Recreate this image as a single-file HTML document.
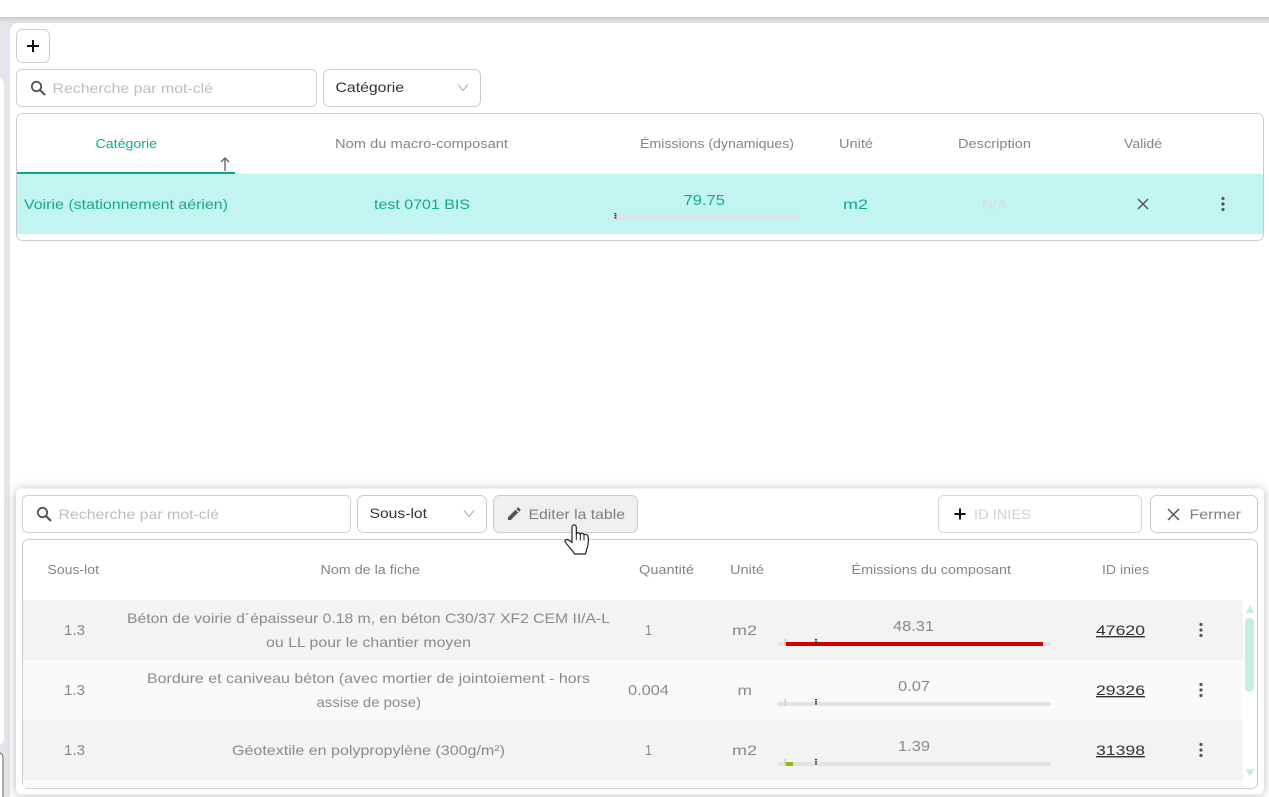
<!DOCTYPE html>
<html lang="fr"><head><meta charset="utf-8"><title>Macro-composants</title>
<style>
html,body{margin:0;padding:0;width:1269px;height:797px;overflow:hidden;background:#e3e5ea}
svg{position:absolute;left:0;top:0;display:block}
text{font-family:"Liberation Sans",sans-serif;font-size:14px;fill:#888}
.h{font-size:13px;fill:#858585}
.t{fill:#14a88f}
.p{fill:#bdbdbd}
.d{fill:#333}
.v{fill:#8a8a8a}
.n{font-size:14.5px}
.l{fill:#333;text-decoration:underline}
</style></head><body>
<svg width="1269" height="797" viewBox="0 0 1269 797" xmlns="http://www.w3.org/2000/svg">
<defs>
<linearGradient id="sh" x1="0" y1="0" x2="0" y2="1"><stop offset="0" stop-color="#c9cbd0"/><stop offset="1" stop-color="#e3e5ea"/></linearGradient>
<filter id="b" x="-5%" y="-20%" width="110%" height="140%"><feGaussianBlur stdDeviation="5"/></filter>
<g id="dots" fill="#555"><circle cx="0" cy="-5.5" r="1.6"/><circle cx="0" cy="0" r="1.6"/><circle cx="0" cy="5.5" r="1.6"/></g>
</defs>
<rect x="0" y="0" width="1269" height="17" fill="#fff"/>
<rect x="0" y="17" width="1269" height="6" fill="url(#sh)"/>
<rect x="-10" y="78" width="14" height="667" rx="6" fill="#fff"/>
<rect x="-10" y="752" width="13" height="60" rx="6" fill="#fff" stroke="#666" stroke-width="1"/>
<rect x="10" y="23" width="1280" height="800" rx="8" fill="#fff"/>

<rect x="16.5" y="29.5" width="33" height="33" rx="6" fill="#fff" stroke="#ccc"/>
<path d="M33 40v12M27 46h12" stroke="#111" stroke-width="2" fill="none"/>
<rect x="16.5" y="69.5" width="300" height="37" rx="5" fill="#fff" stroke="#d2d2d2"/>
<circle cx="36.5" cy="86.5" r="4.7" fill="none" stroke="#555" stroke-width="1.8"/>
<path d="M40 90l5 5" stroke="#555" stroke-width="2.2"/>
<text class="p" x="52.500" y="93" textLength="160.500" lengthAdjust="spacingAndGlyphs">Recherche par mot-clé</text>
<rect x="323.5" y="69.5" width="157" height="37" rx="6" fill="#fff" stroke="#ccc"/>
<text class="d" x="335.500" y="92" textLength="68.500" lengthAdjust="spacingAndGlyphs">Catégorie</text>
<path d="M458 84.5l5 6 5-6" fill="none" stroke="#aaa" stroke-width="1"/>

<rect x="16.5" y="113.5" width="1247" height="127" rx="6" fill="#fff" stroke="#ccc"/>
<text class="h t" x="95.500" y="148" textLength="61.500" lengthAdjust="spacingAndGlyphs">Catégorie</text>
<text class="h" x="335" y="148" textLength="173" lengthAdjust="spacingAndGlyphs">Nom du macro-composant</text>
<text class="h" x="640" y="148" textLength="154" lengthAdjust="spacingAndGlyphs">Émissions (dynamiques)</text>
<text class="h" x="839" y="148" textLength="34" lengthAdjust="spacingAndGlyphs">Unité</text>
<text class="h" x="958" y="148" textLength="73" lengthAdjust="spacingAndGlyphs">Description</text>
<text class="h" x="1124" y="148" textLength="38" lengthAdjust="spacingAndGlyphs">Validé</text>
<path d="M225 171v-12.5M221 162l4-4 4 4" fill="none" stroke="#666" stroke-width="1.4"/>
<rect x="17" y="172" width="218" height="2" fill="#0aa88f"/>
<rect x="17" y="174" width="1246" height="60" fill="#c2f5ef"/>
<text class="t" x="24" y="209" textLength="204" lengthAdjust="spacingAndGlyphs">Voirie (stationnement aérien)</text>
<text class="t" x="374" y="209" textLength="96" lengthAdjust="spacingAndGlyphs">test 0701 BIS</text>
<text class="t n" x="683.500" y="205" textLength="41.500" lengthAdjust="spacingAndGlyphs">79.75</text>
<rect x="614" y="215" width="185" height="5" rx="1" fill="#e2e2e2"/>
<path d="M615.500 213v6" stroke="#111" stroke-width="1.800" stroke-dasharray="1.300 .8"/>
<text class="t" x="843" y="209" textLength="25" lengthAdjust="spacingAndGlyphs">m2</text>
<text x="982" y="209" textLength="25" lengthAdjust="spacingAndGlyphs" style="fill:#d3dedc">N/A</text>
<path d="M1138 199l10 10M1148 199l-10 10" stroke="#555" stroke-width="1.500"/>
<use href="#dots" x="1223" y="204"/>

<rect x="16" y="489" width="1248" height="306" rx="6" fill="#7d8085" opacity=".55" filter="url(#b)"/>
<rect x="16" y="488.500" width="1248" height="306" rx="6" fill="#fff"/>

<rect x="22.5" y="495.5" width="328" height="37" rx="5" fill="#fff" stroke="#d2d2d2"/>
<circle cx="42.5" cy="512.5" r="4.7" fill="none" stroke="#555" stroke-width="1.8"/>
<path d="M46 516l5 5" stroke="#555" stroke-width="2.2"/>
<text class="p" x="58.500" y="519" textLength="160.500" lengthAdjust="spacingAndGlyphs">Recherche par mot-clé</text>
<rect x="357.5" y="495.5" width="129" height="37" rx="6" fill="#fff" stroke="#ccc"/>
<text class="d" x="369.500" y="518" textLength="57.500" lengthAdjust="spacingAndGlyphs">Sous-lot</text>
<path d="M464 510.5l5 6 5-6" fill="none" stroke="#aaa" stroke-width="1"/>
<rect x="493.5" y="495.5" width="144" height="37" rx="6" fill="#efefef" stroke="#ccc"/>
<path d="M508 520v-2.800l7.500-7.500 2.800 2.800-7.500 7.500zM516.300 508.900l1.200-1.200q.6-.6 1.200 0l1.600 1.600q.6.600 0 1.200l-1.200 1.200z" fill="#555"/>
<text x="528.500" y="519" textLength="96.500" lengthAdjust="spacingAndGlyphs" style="fill:#808080">Editer la table</text>
<rect x="938.5" y="495.5" width="203" height="37" rx="5" fill="#fff" stroke="#d8d8d8"/>
<path d="M960 508.500v11M954.500 514h11" stroke="#111" stroke-width="2" fill="none"/>
<text x="974" y="519" textLength="57" lengthAdjust="spacingAndGlyphs" style="fill:#cfcfcf">ID INIES</text>
<rect x="1150.500" y="495.5" width="107" height="37" rx="6" fill="#fff" stroke="#ccc"/>
<path d="M1168 509l11 11M1179 509l-11 11" stroke="#555" stroke-width="1.5"/>
<text x="1189.500" y="519" textLength="51.500" lengthAdjust="spacingAndGlyphs" style="fill:#808080">Fermer</text>

<rect x="22.500" y="539.5" width="1235" height="249" rx="6" fill="#fff" stroke="#ccc"/>
<text class="h" x="47.500" y="574" textLength="51.500" lengthAdjust="spacingAndGlyphs">Sous-lot</text>
<text class="h" x="320.500" y="574" textLength="99.500" lengthAdjust="spacingAndGlyphs">Nom de la fiche</text>
<text class="h" x="639" y="574" textLength="55" lengthAdjust="spacingAndGlyphs">Quantité</text>
<text class="h" x="730" y="574" textLength="34" lengthAdjust="spacingAndGlyphs">Unité</text>
<text class="h" x="851.500" y="574" textLength="159.500" lengthAdjust="spacingAndGlyphs">Émissions du composant</text>
<text class="h" x="1102" y="574" textLength="47" lengthAdjust="spacingAndGlyphs">ID inies</text>

<rect x="23" y="600" width="1220" height="60" fill="#f3f3f3"/>
<rect x="23" y="660" width="1220" height="60" fill="#fafafa"/>
<rect x="23" y="720" width="1220" height="60" fill="#f3f3f3"/>
<rect x="23" y="780" width="1220" height="8" fill="#fafafa"/>

<text class="v n" x="64" y="635" textLength="21" lengthAdjust="spacingAndGlyphs">1.3</text>
<text class="v" x="127" y="623" textLength="483" lengthAdjust="spacingAndGlyphs">Béton de voirie d´épaisseur 0.18 m, en béton C30/37 XF2 CEM II/A-L</text>
<text class="v" x="266" y="647" textLength="205" lengthAdjust="spacingAndGlyphs">ou LL pour le chantier moyen</text>
<text class="v n" x="645" y="635" textLength="7" lengthAdjust="spacingAndGlyphs">1</text>
<text class="v" x="732" y="635" textLength="25" lengthAdjust="spacingAndGlyphs">m2</text>
<text class="v n" x="893" y="631" textLength="41" lengthAdjust="spacingAndGlyphs">48.31</text>
<rect x="777" y="642" width="274" height="4" rx="2" fill="#e3e3e3"/>
<rect x="785.500" y="642" width="257.500" height="4" fill="#d00000"/>
<rect x="784.500" y="639" width="1.500" height="7" fill="#ccc"/>
<path d="M816 639v6" stroke="#111" stroke-width="1.800" stroke-dasharray="1.300 .8"/>
<text class="l" x="1096" y="635" textLength="49" lengthAdjust="spacingAndGlyphs">47620</text>
<use href="#dots" x="1201" y="630"/>

<text class="v n" x="64" y="695" textLength="21" lengthAdjust="spacingAndGlyphs">1.3</text>
<text class="v" x="147" y="683" textLength="443" lengthAdjust="spacingAndGlyphs">Bordure et caniveau béton (avec mortier de jointoiement - hors</text>
<text class="v" x="316.500" y="707" textLength="104.500" lengthAdjust="spacingAndGlyphs">assise de pose)</text>
<text class="v n" x="628" y="695" textLength="41" lengthAdjust="spacingAndGlyphs">0.004</text>
<text class="v" x="737.500" y="695" textLength="14.500" lengthAdjust="spacingAndGlyphs">m</text>
<text class="v n" x="898" y="691" textLength="32" lengthAdjust="spacingAndGlyphs">0.07</text>
<rect x="777" y="702" width="274" height="4" rx="2" fill="#e3e3e3"/>
<rect x="784.500" y="699" width="1.500" height="7" fill="#ccc"/>
<path d="M816 699v6" stroke="#111" stroke-width="1.800" stroke-dasharray="1.300 .8"/>
<text class="l" x="1096" y="695" textLength="49" lengthAdjust="spacingAndGlyphs">29326</text>
<use href="#dots" x="1201" y="690"/>

<text class="v n" x="64" y="755" textLength="21" lengthAdjust="spacingAndGlyphs">1.3</text>
<text class="v" x="232" y="755" textLength="273" lengthAdjust="spacingAndGlyphs">Géotextile en polypropylène (300g/m²)</text>
<text class="v n" x="645" y="755" textLength="7" lengthAdjust="spacingAndGlyphs">1</text>
<text class="v" x="732" y="755" textLength="25" lengthAdjust="spacingAndGlyphs">m2</text>
<text class="v n" x="898" y="751" textLength="32" lengthAdjust="spacingAndGlyphs">1.39</text>
<rect x="777" y="762" width="274" height="4" rx="2" fill="#e3e3e3"/>
<rect x="785.500" y="762" width="7.500" height="4" fill="#8abb0a"/>
<rect x="784.500" y="759" width="1.500" height="7" fill="#ccc"/>
<path d="M816 759v6" stroke="#111" stroke-width="1.800" stroke-dasharray="1.300 .8"/>
<text class="l" x="1096" y="755" textLength="49" lengthAdjust="spacingAndGlyphs">31398</text>
<use href="#dots" x="1201" y="750"/>

<path d="M1250 605l4.500 8h-9z" fill="#c9ece7"/>
<path d="M1250 777l4.500-8h-9z" fill="#c9ece7"/>
<rect x="1245" y="618" width="9" height="74" rx="4" fill="#c9ece7"/>

<path d="M572 541V527.500c0-3.500 4.300-3.500 4.300 0V534c.3-1.700 3.700-1.700 4 .5.300-1.600 3.600-1.500 3.800.7.500-1.300 3.700-1.200 4 1.300.5 3 .3 8-.8 11-.9 2.500-1.300 5-1.800 6.500h-11c-.7-2-2.800-3.800-4.800-6.500-1.500-2-3.500-3.700-4.500-5.500-.8-1.700 1.300-3.200 3.300-2l3.500 2.500z" fill="#fff" stroke="#222" stroke-width="1.200" stroke-linejoin="round"/>
<path d="M576.300 534v6M580.300 534.500v6M584 535v5.500" stroke="#222" stroke-width="1" fill="none"/>
</svg>
</body></html>
